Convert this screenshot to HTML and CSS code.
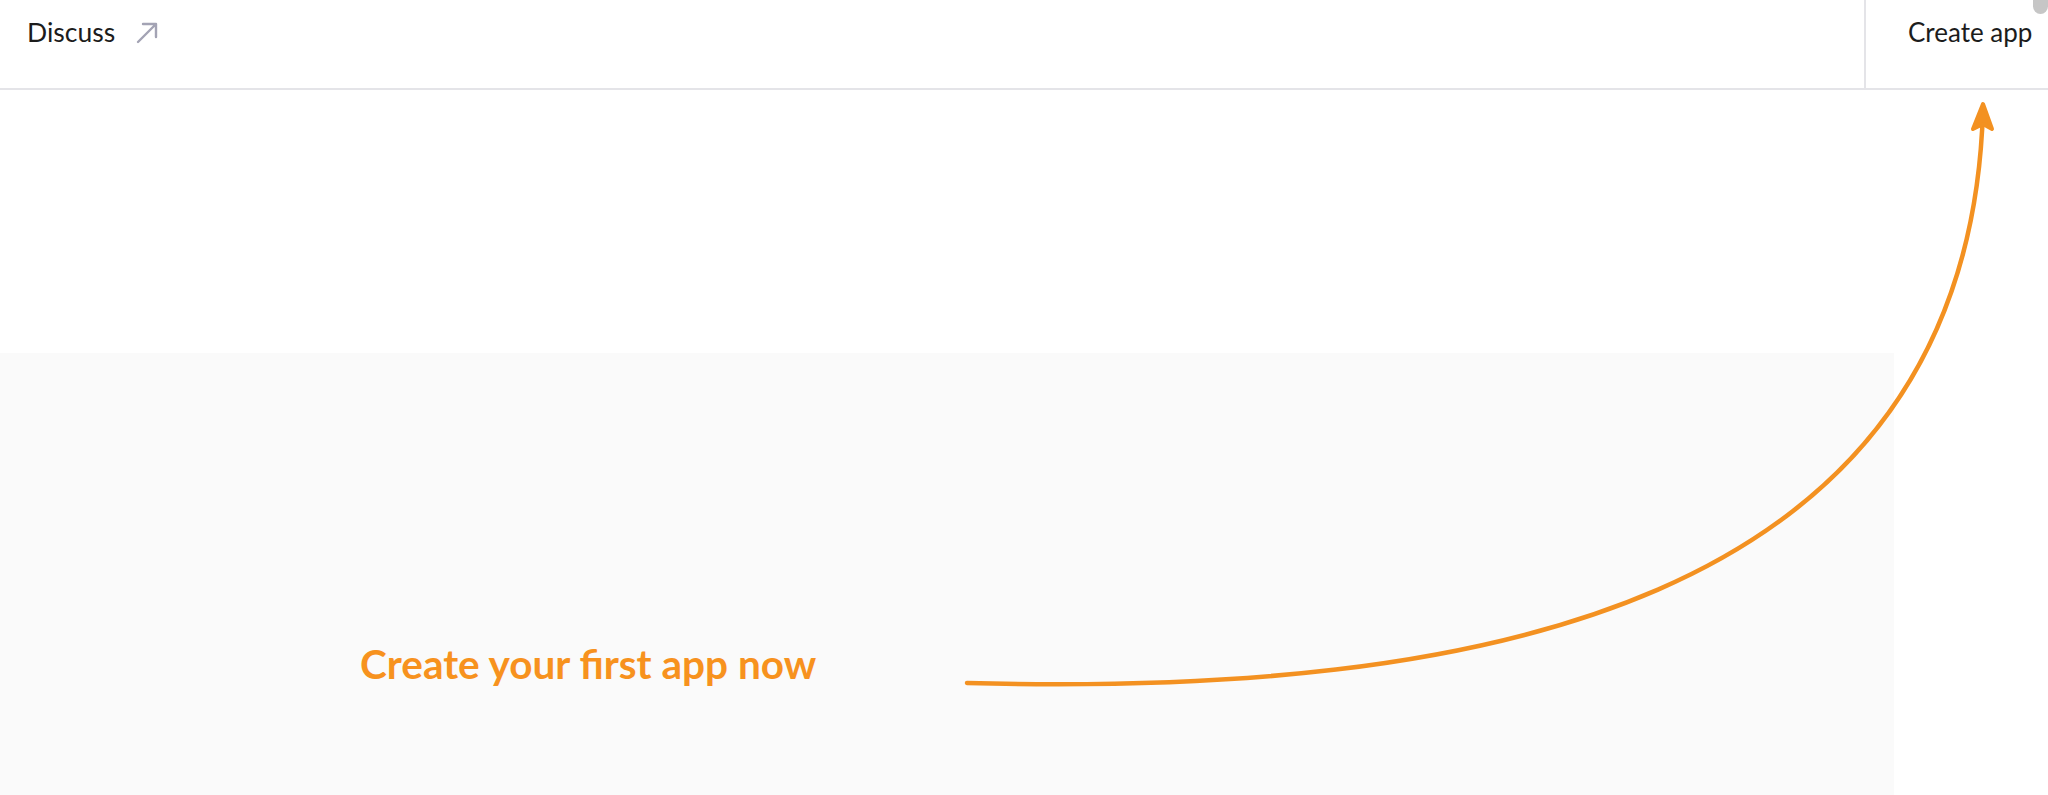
FILE: index.html
```html
<!DOCTYPE html>
<html lang="en">
<head>
<meta charset="utf-8">
<title>Apps</title>
<link rel="stylesheet" href="styles.css">
</head>
<body>
<div class="page">
  <header class="topbar">
    <nav class="nav-left">
      <a class="nav-link" href="#">Discuss
        <svg class="ext-icon" width="24" height="24" viewBox="0 0 24 24" aria-hidden="true">
          <path d="M3 21 L21 3 M8 3 H21 V16" fill="none" stroke="#a3a3b4" stroke-width="2.4" stroke-linecap="round" stroke-linejoin="round"/>
        </svg>
      </a>
    </nav>
    <div class="nav-right">
      <a class="create-btn" href="#">Create app</a>
    </div>
  </header>
  <div class="spacer"></div>
  <section class="empty">
    <p class="cta">Create your first app now</p>
  </section>
  <svg class="guide" width="2048" height="795" viewBox="0 0 2048 795" aria-hidden="true">
    <path d="M967 683 C 1470 696, 1968 612, 1983 110" fill="none" stroke="#f39121" stroke-width="4.5" stroke-linecap="round"/>
    <path d="M1973 129 L1983 104 L1992 129 L1983 124 Z" fill="#f39121" stroke="#f39121" stroke-width="4" stroke-linecap="round" stroke-linejoin="round"/>
  </svg>
  <div class="scroll-thumb"></div>
</div>
</body>
</html>
```
FILE: styles.css
```css
html, body {
  margin: 0;
  padding: 0;
  background: #ffffff;
  overflow: hidden;
}
.page {
  position: relative;
  width: 2048px;
  height: 795px;
  font-family: Lato, "Liberation Sans", sans-serif;
  color: #1f1f1f;
}
.topbar {
  display: flex;
  justify-content: space-between;
  height: 88px;
  border-bottom: 2px solid #e4e4e8;
  box-sizing: content-box;
}
.nav-left {
  display: flex;
  align-items: center;
  padding-left: 27px;
}
.nav-link {
  display: flex;
  align-items: center;
  gap: 20px;
  font-size: 26.5px;
  color: #1c1c1c;
  text-decoration: none;
  margin-top: -24px;
}
.ext-icon {
  display: block;
  margin-top: 2px;
}
.nav-right {
  display: flex;
  align-items: center;
  width: 184px;
  border-left: 2px solid #e4e4e8;
  padding-left: 42px;
  box-sizing: border-box;
}
.create-btn {
  font-size: 26px;
  color: #1c1c1c;
  text-decoration: none;
  margin-top: -24px;
  white-space: nowrap;
}
.spacer {
  height: 263px;
}
.empty {
  width: 1894px;
  height: 442px;
  background: #fafafa;
  box-sizing: border-box;
  padding-top: 283px;
  padding-left: 360px;
}
.cta {
  margin: 0;
  font-size: 40.5px;
  line-height: 56px;
  font-weight: 700;
  color: #f7921e;
}
.guide {
  position: absolute;
  left: 0;
  top: 0;
  pointer-events: none;
}
.scroll-thumb {
  position: absolute;
  right: 0;
  top: -8px;
  width: 15px;
  height: 22px;
  border-radius: 8px;
  background: #c6c6c6;
}
```
